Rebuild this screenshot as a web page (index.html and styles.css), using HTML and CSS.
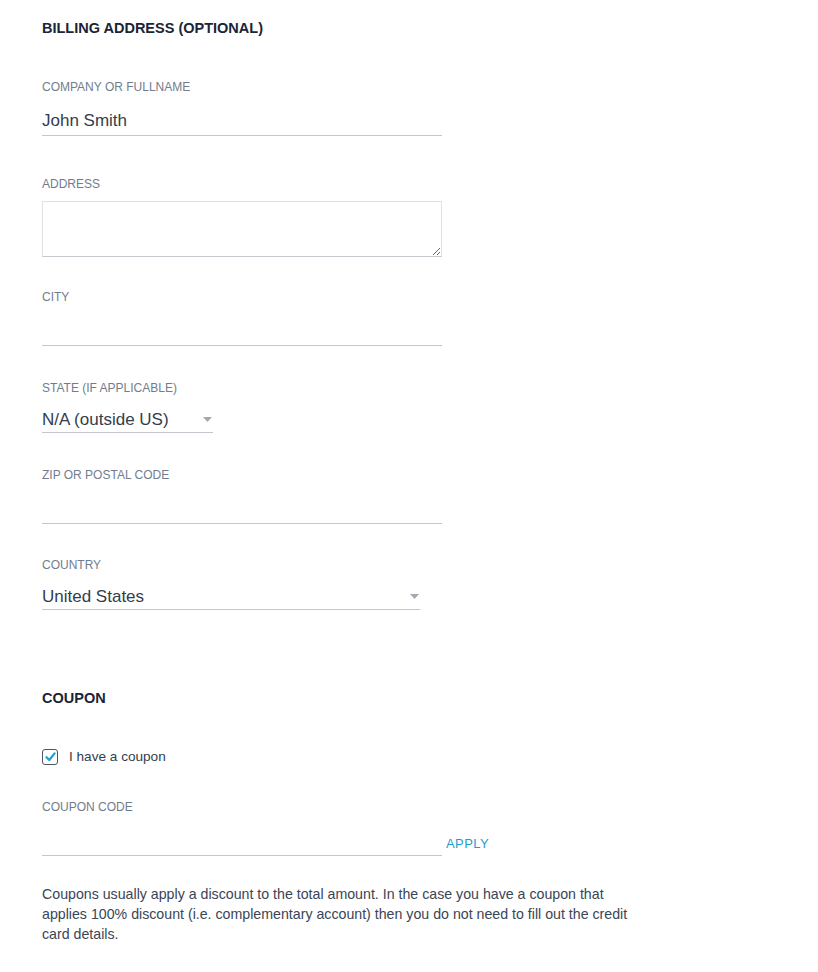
FILE: index.html
```html
<!DOCTYPE html>
<html lang="en">
<head>
<meta charset="utf-8">
<title>Billing address</title>
<link rel="stylesheet" href="styles.css">
</head>
<body>
<main class="page">
  <section class="section">
    <h2 class="section-title">BILLING ADDRESS (OPTIONAL)</h2>

    <div class="field field-first">
      <label class="label" for="name">COMPANY OR FULLNAME</label>
      <input class="input" id="name" type="text" value="John Smith">
    </div>

    <div class="field field-area">
      <label class="label" for="address">ADDRESS</label>
      <textarea class="textarea" id="address"></textarea>
    </div>

    <div class="field field-after-area">
      <label class="label" for="city">CITY</label>
      <input class="input" id="city" type="text">
    </div>

    <div class="field">
      <div class="label">STATE (IF APPLICABLE)</div>
      <div class="select select-state">
        <span class="select-value">N/A (outside US)</span>
        <svg class="caret" width="9" height="5" viewBox="0 0 9 5"><path d="M0 0h9L4.5 5z" fill="#a3a9b1"/></svg>
      </div>
    </div>

    <div class="field">
      <label class="label" for="zip">ZIP OR POSTAL CODE</label>
      <input class="input" id="zip" type="text">
    </div>

    <div class="field field-country">
      <div class="label">COUNTRY</div>
      <div class="select select-country">
        <span class="select-value">United States</span>
        <svg class="caret" width="9" height="5" viewBox="0 0 9 5"><path d="M0 0h9L4.5 5z" fill="#a3a9b1"/></svg>
      </div>
    </div>
  </section>

  <section class="section coupon">
    <h2 class="section-title">COUPON</h2>

    <label class="check-row">
      <span class="checkbox">
        <svg width="11" height="10" viewBox="0 0 11 10"><path d="M1.5 5.2 4.3 8 9.6 1.4" fill="none" stroke="#1b9fd6" stroke-width="2.2" stroke-linecap="round" stroke-linejoin="round"/></svg>
      </span>
      <span class="check-text">I have a coupon</span>
    </label>

    <div class="field field-coupon">
      <label class="label" for="code">COUPON CODE</label>
      <div class="coupon-row">
        <input class="input" id="code" type="text">
        <button class="apply" type="button">APPLY</button>
      </div>
    </div>

    <p class="note">Coupons usually apply a discount to the total amount. In the case you have a coupon that applies 100% discount (i.e. complementary account) then you do not need to fill out the credit card details.</p>
  </section>
</main>
</body>
</html>
```

FILE: styles.css
```css
html, body {
  margin: 0;
  padding: 0;
  background: #ffffff;
}

body {
  font-family: "Liberation Sans", Arial, sans-serif;
  color: #2f3a4a;
}

.page {
  padding: 18px 0 40px 42px;
}

.section-title {
  margin: 0;
  font-size: 14.5px;
  line-height: 20px;
  font-weight: bold;
  color: #1b2536;
}

.field {
  margin-top: 34px;
}

.field-first {
  margin-top: 41px;
}

.field-area {
  margin-top: 40px;
}

.field-after-area {
  margin-top: 32px;
}

.field-country {
  margin-top: 33px;
}

.label {
  display: block;
  font-size: 12px;
  line-height: 16px;
  color: #717d8e;
}

.input {
  display: block;
  box-sizing: border-box;
  width: 400px;
  height: 41px;
  margin: 0;
  padding: 11px 0 0 0;
  border: 0;
  border-bottom: 1px solid #c3c7cd;
  border-radius: 0;
  outline: none;
  background: transparent;
  font-family: inherit;
  font-size: 17px;
  color: #333d4c;
}

.textarea {
  display: block;
  box-sizing: border-box;
  width: 400px;
  height: 56px;
  margin: 9px 0 0 0;
  padding: 4px 6px;
  border: 1px solid #e0e2e4;
  border-bottom-color: #c6c9cd;
  border-radius: 0;
  font-family: inherit;
  font-size: 15px;
  color: #333d4c;
  outline: none;
}

.select {
  display: flex;
  align-items: center;
  justify-content: space-between;
  box-sizing: border-box;
  height: 37px;
  padding: 11px 1px 0 0;
  border-bottom: 1px solid #c3c7cd;
}

.select-state {
  width: 171px;
}

.select-country {
  width: 378px;
}

.select-value {
  font-size: 17px;
  line-height: 22px;
  color: #333d4c;
}

.caret {
  display: block;
  flex: none;
}

.coupon {
  margin-top: 78px;
}

.check-row {
  display: flex;
  align-items: center;
  gap: 11px;
  height: 20px;
  margin-top: 39px;
}

.checkbox {
  display: flex;
  align-items: center;
  justify-content: center;
  box-sizing: border-box;
  width: 16px;
  height: 16px;
  border: 1.5px solid #4d5563;
  border-radius: 3px;
}

.check-text {
  font-size: 13.6px;
  line-height: 20px;
  color: #333d4c;
}

.field-coupon {
  margin-top: 32px;
}

.coupon-row {
  display: flex;
  align-items: flex-end;
}

.apply {
  margin: 0 0 4px 4px;
  padding: 0;
  border: 0;
  background: none;
  font-family: inherit;
  font-size: 13px;
  line-height: 16px;
  letter-spacing: 0.4px;
  color: #1e9ecf;
  cursor: pointer;
}

.note {
  max-width: 600px;
  margin: 28px 0 0 0;
  font-size: 14.2px;
  line-height: 20px;
  color: #3a4556;
}
```
